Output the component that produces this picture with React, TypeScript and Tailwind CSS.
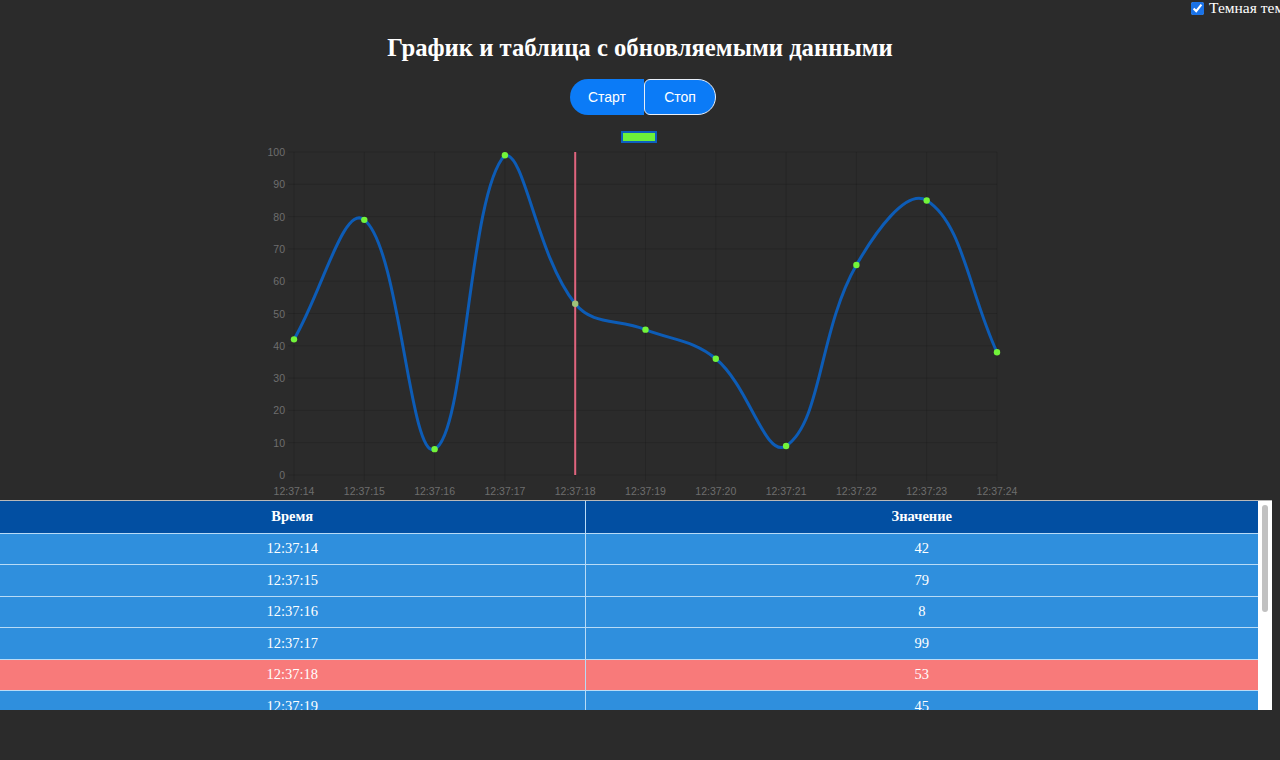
import React from "react";

const data = [42, 79, 8, 99, 53, 45, 36, 9, 65, 85, 38];
const times = ["12:37:14","12:37:15","12:37:16","12:37:17","12:37:18","12:37:19","12:37:20","12:37:21","12:37:22","12:37:23","12:37:24"];

const L = 44, R = 747, T = 27, B = 350;

function buildPath(pts: { x: number; y: number }[]) {
  const t = 0.4;
  const cps = pts.map((p1, i) => {
    const p0 = pts[i - 1] || p1;
    const p2 = pts[i + 1] || p1;
    const d01 = Math.hypot(p1.x - p0.x, p1.y - p0.y);
    const d12 = Math.hypot(p2.x - p1.x, p2.y - p1.y);
    let s01 = d01 / (d01 + d12);
    let s12 = d12 / (d01 + d12);
    if (isNaN(s01)) s01 = 0;
    if (isNaN(s12)) s12 = 0;
    const fa = t * s01, fb = t * s12;
    const clampY = (y: number) => Math.max(T, Math.min(B, y));
    return {
      prev: { x: p1.x - fa * (p2.x - p0.x), y: clampY(p1.y - fa * (p2.y - p0.y)) },
      next: { x: p1.x + fb * (p2.x - p0.x), y: clampY(p1.y + fb * (p2.y - p0.y)) },
    };
  });
  let d = `M${pts[0].x},${pts[0].y}`;
  for (let i = 1; i < pts.length; i++) {
    const a = cps[i - 1].next, b = cps[i].prev;
    d += ` C${a.x},${a.y} ${b.x},${b.y} ${pts[i].x},${pts[i].y}`;
  }
  return d;
}

function Chart() {
  const stepX = (R - L) / 10;
  const pts = data.map((v, i) => ({ x: L + i * stepX, y: B - (v / 100) * (B - T) }));
  const yTicks = [0, 10, 20, 30, 40, 50, 60, 70, 80, 90, 100];
  return (
    <svg width={780} height={375} viewBox="0 0 780 375" className="block">
      <rect x={372} y={7} width={34} height={10} fill="#6cf13a" stroke="#0d5fbf" strokeWidth={2} />
      {yTicks.map((v) => {
        const y = B - (v / 100) * (B - T);
        return (
          <g key={v}>
            <line x1={L - 6} x2={R} y1={y} y2={y} stroke="rgba(0,0,0,0.12)" strokeWidth={1} />
            <text x={35} y={y + 4} textAnchor="end" fontSize={10.5} fill="#6e6e6e" fontFamily="'Liberation Sans', Arial, sans-serif">{v}</text>
          </g>
        );
      })}
      {pts.map((p, i) => (
        <g key={i}>
          <line x1={p.x} x2={p.x} y1={T} y2={B + 6} stroke="rgba(0,0,0,0.12)" strokeWidth={1} />
          <text x={p.x} y={370} textAnchor="middle" fontSize={10.5} fill="#6e6e6e" fontFamily="'Liberation Sans', Arial, sans-serif">{times[i]}</text>
        </g>
      ))}
      <path d={buildPath(pts)} fill="none" stroke="#0d5cb6" strokeWidth={3} />
      <line x1={pts[4].x} x2={pts[4].x} y1={T} y2={B} stroke="#e0647e" strokeWidth={2} />
      {pts.map((p, i) => (
        <circle key={i} cx={p.x} cy={p.y} r={3.2} fill={i === 4 ? "#9fc27a" : "#72f43a"} />
      ))}
    </svg>
  );
}

export default function App() {
  return (
    <div className="relative w-[1280px] h-[760px] overflow-hidden bg-[#2b2b2b] flex flex-col items-center" style={{ fontFamily: "'Liberation Serif', 'Times New Roman', serif" }}>
      <label className="absolute left-[1191px] top-0 flex items-center gap-[5px] whitespace-nowrap text-[15.5px] text-white leading-[16px]">
        <input type="checkbox" defaultChecked className="m-0 w-[13px] h-[13px] accent-[#1a73e8]" />
        <span>Темная тема</span>
      </label>

      <h1 className="mt-[34px] text-[24.7px] leading-[28px] font-bold text-white">График и таблица с обновляемыми данными</h1>

      <div className="mt-[17px] ml-[6px] flex h-9" style={{ fontFamily: "'Liberation Sans', Arial, sans-serif" }}>
        <button className="w-[74px] h-9 bg-[#0b7bf7] text-white text-[14px] rounded-l-[18px]">Старт</button>
        <button className="w-[72px] h-9 bg-[#0b7bf7] text-white text-[14px] border border-[#e8eef8] rounded-r-[18px] rounded-l-[6px]">Стоп</button>
      </div>

      <div className="mt-[10px]">
        <Chart />
      </div>

      <div className="self-start w-[1272px] h-[210px] bg-white border-t border-[#b9b9b9] flex">
        <div className="w-[1258px] h-full overflow-y-scroll [scrollbar-width:none]">
          <table className="w-full border-collapse text-white text-[14.5px]">
            <thead>
              <tr className="bg-[#024fa2] h-[32px]">
                <th className="w-[585px] border-r border-b border-[#b8dbf6] font-bold">Время</th>
                <th className="border-b border-[#b8dbf6] font-bold">Значение</th>
              </tr>
            </thead>
            <tbody>
              {data.map((v, i) => (
                <tr key={i} className={`h-[31.6px] ${i === 4 ? "bg-[#f87a7a]" : "bg-[#2f8fdd]"}`}>
                  <td className="text-center border-r border-b border-[#b8dbf6]">{times[i]}</td>
                  <td className="text-center border-b border-[#b8dbf6]">{v}</td>
                </tr>
              ))}
            </tbody>
          </table>
        </div>
        <div className="w-[14px] h-full bg-white pt-[4px] pl-[4px]">
          <div className="w-[6px] h-[107px] rounded-full bg-[#c1c1c1]" />
        </div>
      </div>
    </div>
  );
}
